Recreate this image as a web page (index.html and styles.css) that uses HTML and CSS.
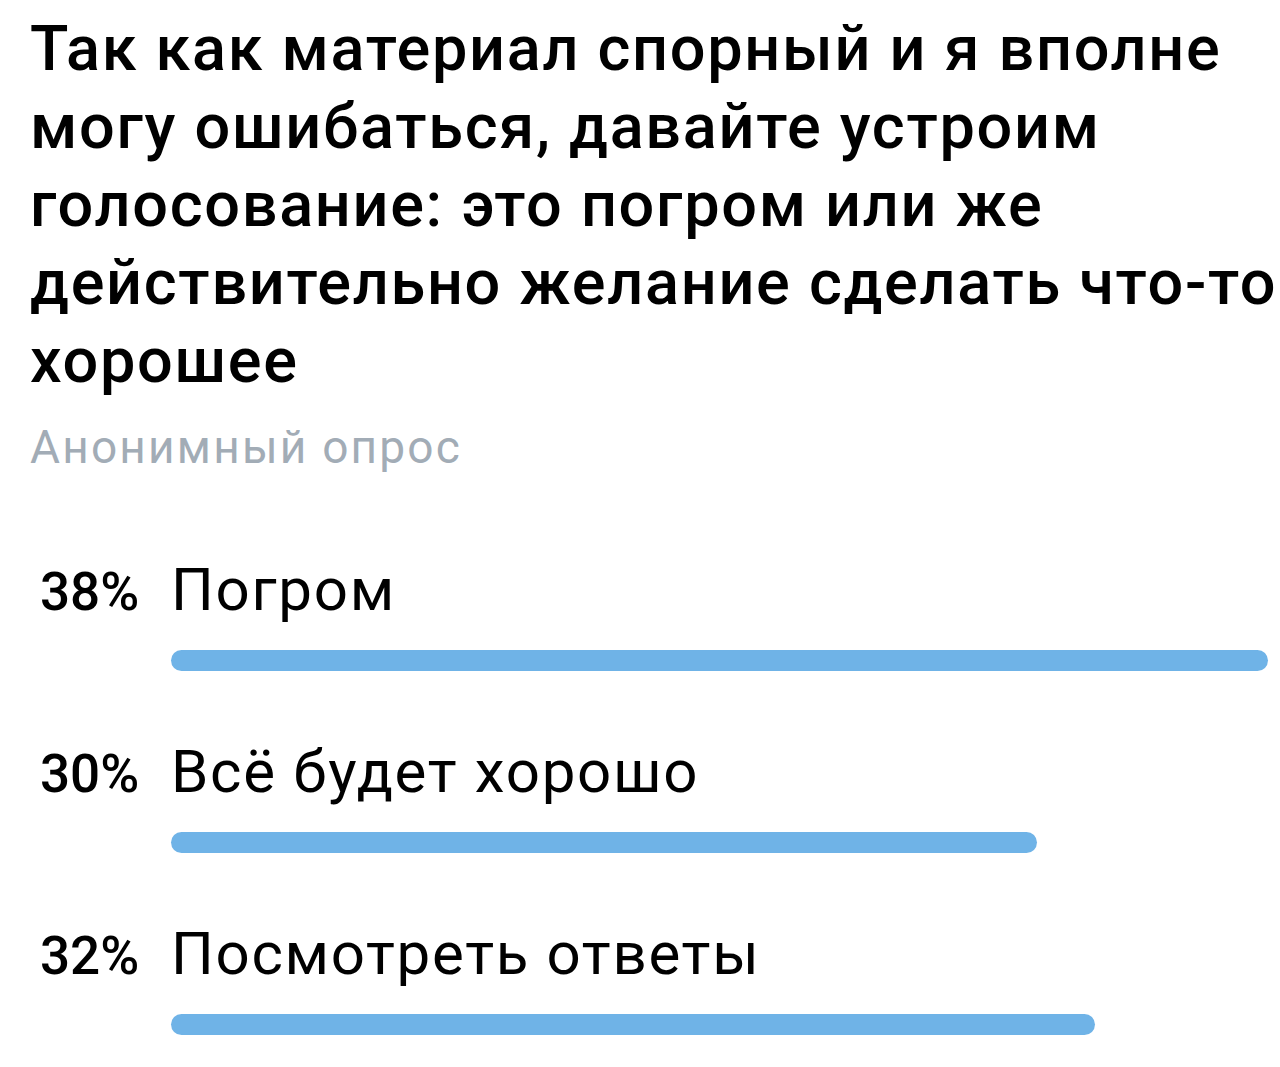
FILE: index.html
```html
<!DOCTYPE html>
<html lang="ru">
<head>
<meta charset="utf-8">
<link rel="stylesheet" href="styles.css">
</head>
<body>
<div class="poll">
  <h1 class="question">Так как материал спорный и я вполне<br>могу ошибаться, давайте устроим<br>голосование: это погром или же<br>действительно желание сделать что-то<br>хорошее</h1>
  <div class="kind">Анонимный опрос</div>
  <div class="options">
    <div class="option">
      <div class="row"><span class="pct">38%</span><span class="label">Погром</span></div>
      <div class="track"><div class="bar" style="width:100%"></div></div>
    </div>
    <div class="option">
      <div class="row"><span class="pct">30%</span><span class="label">Всё будет хорошо</span></div>
      <div class="track"><div class="bar" style="width:78.9%"></div></div>
    </div>
    <div class="option">
      <div class="row"><span class="pct">32%</span><span class="label">Посмотреть ответы</span></div>
      <div class="track"><div class="bar" style="width:84.2%"></div></div>
    </div>
  </div>
</div>
</body>
</html>
```

FILE: styles.css
```css
html, body {
  margin: 0;
  padding: 0;
  background: #ffffff;
}
body {
  font-family: Roboto, "Noto Sans", sans-serif;
  color: #000;
  overflow: hidden;
}
.poll {
  padding: 10px 0 0 30px;
}
.question {
  margin: 0;
  font-size: 63px;
  font-weight: 500;
  line-height: 78px;
  white-space: nowrap;
  letter-spacing: 1.7px;
}
.kind {
  margin-top: 20px;
  font-size: 46px;
  line-height: 54px;
  letter-spacing: 2.2px;
  color: #a2acb6;
}
.options {
  margin-top: 86px;
  display: flex;
  flex-direction: column;
  gap: 71px;
}
.option {
  display: flex;
  flex-direction: column;
  gap: 28px;
}
.row {
  display: flex;
  align-items: baseline;
  line-height: 60px;
}
.pct {
  width: 141px;
  padding-left: 10px;
  box-sizing: border-box;
  font-size: 53px;
  font-weight: 500;
}
.label {
  font-size: 60px;
  letter-spacing: 1.7px;
}
.track {
  margin-left: 141px;
  width: 1097px;
}
.bar {
  height: 21px;
  border-radius: 11px;
  background: #6fb3e7;
}
```
